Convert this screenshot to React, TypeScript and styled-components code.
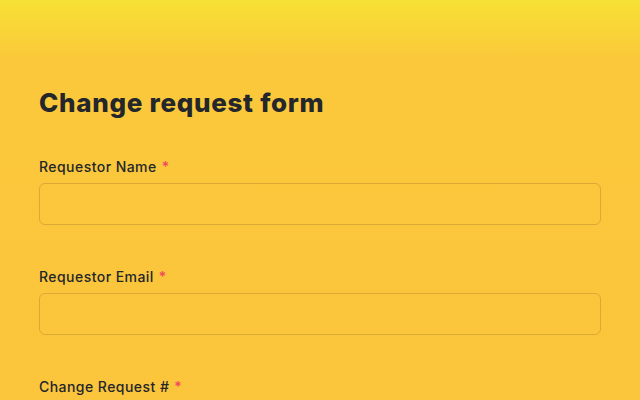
import styled, { createGlobalStyle } from 'styled-components'

const GlobalStyle = createGlobalStyle`
  html, body {
    margin: 0;
    padding: 0;
  }
  body {
    min-height: 100vh;
    background: linear-gradient(180deg, #f7e134 0px, #fbc83b 60px, #fbc43c 100%) no-repeat;
    background-color: #fbc43c;
    font-family: Inter, "Noto Sans", sans-serif;
    color: #23262b;
  }
`

const Page = styled.main`
  padding: 85px 39px 0 39px;
`

const Title = styled.h1`
  margin: 0 0 36px 0;
  font-size: 26px;
  font-weight: 800;
  line-height: 36px;
  letter-spacing: 0.7px;
`

const Form = styled.form`
  display: flex;
  flex-direction: column;
  gap: 42px;
`

const Field = styled.div`
  display: flex;
  flex-direction: column;
  gap: 6px;
`

const Label = styled.label`
  font-size: 14px;
  font-weight: 500;
  line-height: 20px;
  letter-spacing: 0.45px;
`

const Required = styled.span`
  color: #ef4560;
  margin-left: 5px;
`

const TextInput = styled.input`
  box-sizing: border-box;
  width: 562px;
  height: 42px;
  border: 1px solid #dcaa34;
  border-radius: 6px;
  background: transparent;
  padding: 0 12px;
  font: inherit;
  outline: none;
`

const fields = [
  { id: 'name', label: 'Requestor Name', type: 'text' },
  { id: 'email', label: 'Requestor Email', type: 'email' },
  { id: 'number', label: 'Change Request #', type: 'text' },
]

export default function App() {
  return (
    <>
      <GlobalStyle />
      <Page>
        <Title>Change request form</Title>
        <Form onSubmit={(e) => e.preventDefault()}>
          {fields.map((f) => (
            <Field key={f.id}>
              <Label htmlFor={f.id}>
                {f.label}
                <Required>*</Required>
              </Label>
              <TextInput id={f.id} type={f.type} />
            </Field>
          ))}
        </Form>
      </Page>
    </>
  )
}
